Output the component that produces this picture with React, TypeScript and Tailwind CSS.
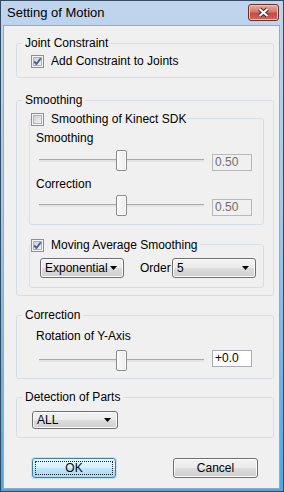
import React from 'react'

const font = "font-['Liberation_Sans',Arial,sans-serif]"

function Check({ checked }: { checked: boolean }) {
  return (
    <svg width="13" height="13" viewBox="0 0 13 13" className="shrink-0">
      <defs>
        <linearGradient id="cbg" x1="0" y1="0" x2="1" y2="1">
          <stop offset="0" stopColor="#c9cdd3" />
          <stop offset="1" stopColor="#f4f4f4" />
        </linearGradient>
      </defs>
      <rect x="0.5" y="0.5" width="12" height="12" fill="#f4f4f4" stroke="#8e8f8f" />
      <rect x="2.5" y="2.5" width="8" height="8" fill="url(#cbg)" stroke="#aeb2b8" />
      {checked && <path d="M3.2 6.4 L5.4 9 L9.8 3.2" fill="none" stroke="#4a5f97" strokeWidth="1.9" />}
    </svg>
  )
}

function Group({ label, className = '', children }: { label: React.ReactNode; className?: string; children: React.ReactNode }) {
  return (
    <fieldset className={`ml-[12px] w-[258px] border border-[#d5dfe5] rounded-[3px] ${className}`}>
      <legend className="ml-[5px] px-[3px] leading-[14px]">{label}</legend>
      {children}
    </fieldset>
  )
}

function CheckGroup({ label, checked, legendPad, className = '', children }: { label: string; checked: boolean; legendPad: string; className?: string; children: React.ReactNode }) {
  return (
    <fieldset className={`ml-[12px] w-[235px] border border-[#d5dfe5] rounded-[3px] ${className}`}>
      <legend className={`ml-[1px] ${legendPad}`}>
        <div className="flex items-end h-[16px] gap-[7px]">
          <Check checked={checked} />
          <span className="leading-[14px]">{label}</span>
        </div>
      </legend>
      {children}
    </fieldset>
  )
}

function Slider({ value }: { value: number }) {
  return (
    <div className="relative w-[165px] h-[21px] shrink-0">
      <div className="absolute left-0 right-0 top-[9px] h-[3px] bg-[#e4e4e4] border-t border-[#a9a9a9]" />
      <div
        className="absolute top-0 w-[11px] h-[21px] border border-[#8a8a8a] rounded-[2px] bg-[linear-gradient(90deg,#fafafa,#ececec)] shadow-[inset_0_0_0_1px_#fff]"
        style={{ left: Math.round(value * (165 - 11)) }}
      />
    </div>
  )
}

function Combo({ text, className = '' }: { text: string; className?: string }) {
  return (
    <div className={`flex items-center shrink-0 pl-[4px] pr-[6px] border border-[#707070] rounded-[3px] bg-[linear-gradient(#f2f2f2,#ebebeb_50%,#dddddd_50%,#cfcfcf)] shadow-[inset_0_0_0_1px_#fcfcfc] ${className}`}>
      <span className="flex-1">{text}</span>
      <svg width="7" height="4" viewBox="0 0 7 4">
        <path d="M0 0H7L3.5 4Z" fill="#000" />
      </svg>
    </div>
  )
}

export default function App() {
  return (
    <div className={`w-[284px] h-[492px] flex flex-col border border-[#344a61] bg-[linear-gradient(#c0d5ec,#a6cbee_40%,#4aa8e6)] text-[12px] leading-[14px] text-black ${font}`}>
      {/* title bar */}
      <div className="h-[24px] shrink-0 flex items-start pl-[6px] pr-[4px]">
        <span className="mt-[4px] text-[13px] leading-[16px]">Setting of Motion</span>
        <div className="ml-auto mt-[3px] w-[31px] h-[17px] flex items-center justify-center border border-[#6b2f2a] rounded-[3px] bg-[linear-gradient(#e8aa9f,#d7786b_45%,#c8493f_55%,#d0685c)] shadow-[inset_0_0_0_1px_#f0c4bc]">
          <svg width="13" height="11" viewBox="0 0 13 11">
            <path d="M2.5 2L10.5 9M10.5 2L2.5 9" stroke="#4d2424" strokeWidth="4.2" />
            <path d="M2.5 2L10.5 9M10.5 2L2.5 9" stroke="#fff" strokeWidth="2.2" />
          </svg>
        </div>
      </div>

      {/* client area */}
      <div className="flex-1 ml-[2px] mr-[3px] mb-[2px] border border-[#98aabd] bg-[#f0f0f0] flex flex-col">
        <Group label="Joint Constraint" className="mt-[10px]">
          <div className="flex items-center gap-[7px] pl-[14px] pt-[4px] pb-[9px]">
            <Check checked />
            <span>Add Constraint to Joints</span>
          </div>
        </Group>

        <Group label="Smoothing" className="mt-[15px]">
          <div className="pb-[7px]">
            <CheckGroup label="Smoothing of Kinect SDK" checked={false} legendPad="pr-[1px]" className="mt-[3px]">
              <div className="pl-[6px] pb-[8px]">
                <div className="mt-[5px]">Smoothing</div>
                <div className="mt-[5px] flex">
                  <div className="ml-[3px]"><Slider value={0.5} /></div>
                  <div className="self-end ml-[8px] w-[40px] h-[17px] pl-[2px] border border-[#b9b9b9] bg-[#f0f0f0] text-[#6d6d6d] leading-[15px]">0.50</div>
                </div>
                <div className="mt-[6px]">Correction</div>
                <div className="mt-[4px] flex">
                  <div className="ml-[3px]"><Slider value={0.5} /></div>
                  <div className="self-end ml-[8px] w-[40px] h-[17px] pl-[2px] border border-[#b9b9b9] bg-[#f0f0f0] text-[#6d6d6d] leading-[15px]">0.50</div>
                </div>
              </div>
            </CheckGroup>

            <CheckGroup label="Moving Average Smoothing" checked legendPad="pr-[2px]" className="mt-[11px]">
              <div className="flex items-center mt-[6px] pb-[9px]">
                <Combo text="Exponential" className="ml-[10px] w-[84px] h-[20px]" />
                <span className="ml-[16px] w-[32px]">Order</span>
                <Combo text="5" className="w-[84px] h-[20px]" />
              </div>
            </CheckGroup>
          </div>
        </Group>

        <Group label="Correction" className="mt-[12px]">
          <div className="pl-[19px] pb-[7px]">
            <div className="mt-[7px]">Rotation of Y-Axis</div>
            <div className="mt-[7px] flex">
              <div className="ml-[3px]"><Slider value={0.5} /></div>
              <div className="self-start ml-[8px] w-[40px] h-[17px] pl-[2px] border border-[#abadb3] bg-white leading-[15px]">+0.0</div>
            </div>
          </div>
        </Group>

        <Group label="Detection of Parts" className="mt-[11px]">
          <div className="pl-[15px] pt-[7px] pb-[8px]">
            <Combo text="ALL" className="w-[86px] h-[18px]" />
          </div>
        </Group>

        {/* buttons */}
        <div className="mt-[20px] flex">
          <div className="ml-[28px] w-[84px] h-[20px] p-[2px] border border-[#3c7fb1] rounded-[3px] bg-[linear-gradient(#eaf6fd,#d9f0fc_50%,#bee6fd_50%,#a7d9f5)] shadow-[0_0_0_1px_#bfe3f9]">
            <div className="h-full border border-dotted border-[#222] flex items-center justify-center">OK</div>
          </div>
          <div className="ml-[57px] w-[85px] h-[20px] border border-[#707070] rounded-[3px] bg-[linear-gradient(#f2f2f2,#ebebeb_50%,#dddddd_50%,#cfcfcf)] shadow-[inset_0_0_0_1px_#fcfcfc] flex items-center justify-center">
            Cancel
          </div>
        </div>
      </div>
    </div>
  )
}
